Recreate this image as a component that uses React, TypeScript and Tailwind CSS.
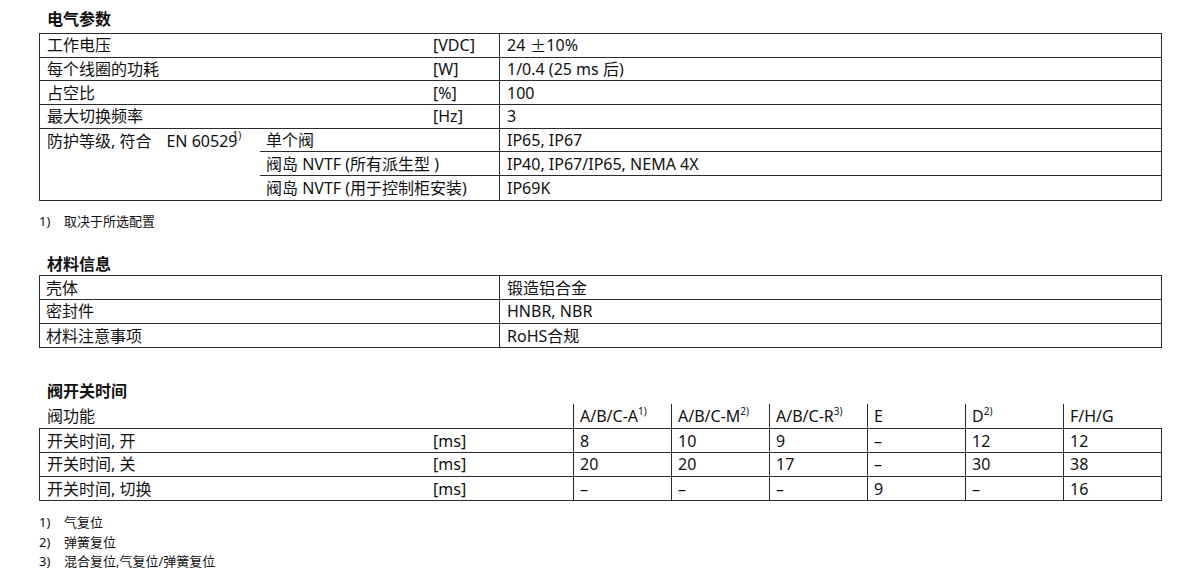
import React from "react";

const FONT = "font-['Noto_Sans','Noto_Sans_CJK_SC',sans-serif]";

const Sup: React.FC<{ children: React.ReactNode; className?: string }> = ({ children, className = "" }) => (
  <span className={`relative -top-[5px] text-[10px] ${className}`}>{children}</span>
);

const Title: React.FC<{ children: React.ReactNode; className?: string }> = ({ children, className = "" }) => (
  <div className={`h-[20px] pl-[8px] text-[16px] font-bold leading-[20px] ${className}`}>{children}</div>
);

const Note: React.FC<{ n: string; text: string }> = ({ n, text }) => (
  <div className="flex h-[19.5px] items-center text-[13px]">
    <span className="w-[25px]">{n}</span>
    <span>{text}</span>
  </div>
);

const electrical: { label: string; unit: string; value: React.ReactNode }[] = [
  {
    label: "工作电压",
    unit: "[VDC]",
    value: (
      <>
        24<span className="ml-[5px] font-['Noto_Sans_CJK_SC',sans-serif]">±</span>10%
      </>
    ),
  },
  { label: "每个线圈的功耗", unit: "[W]", value: "1/0.4 (25 ms 后)" },
  { label: "占空比", unit: "[%]", value: "100" },
  { label: "最大切换频率", unit: "[Hz]", value: "3" },
];

const protection = [
  { sub: "单个阀", value: "IP65, IP67" },
  { sub: "阀岛 NVTF (所有派生型 )", value: "IP40, IP67/IP65, NEMA 4X" },
  { sub: "阀岛 NVTF (用于控制柜安装)", value: "IP69K" },
];

const materials = [
  { label: "壳体", value: "锻造铝合金" },
  { label: "密封件", value: "HNBR, NBR" },
  { label: "材料注意事项", value: "RoHS合规" },
];

const timeHeaders: { name: string; note?: string }[] = [
  { name: "A/B/C-A", note: "1)" },
  { name: "A/B/C-M", note: "2)" },
  { name: "A/B/C-R", note: "3)" },
  { name: "E" },
  { name: "D", note: "2)" },
  { name: "F/H/G" },
];

const timeRows = [
  { label: "开关时间, 开", values: ["8", "10", "9", "–", "12", "12"] },
  { label: "开关时间, 关", values: ["20", "20", "17", "–", "30", "38"] },
  { label: "开关时间, 切换", values: ["–", "–", "–", "9", "–", "16"] },
];

const row = "flex h-[23.7px] items-center border-b border-[#2b2b2b] last:border-b-0";

export default function App() {
  return (
    <div className={`min-h-screen bg-white pt-[9px] pl-[39px] pr-[40px] text-[16px] text-[#111] ${FONT}`}>
      {/* Electrical */}
      <Title>电气参数</Title>
      <div className="mt-[4px] border border-[#2b2b2b]">
        {electrical.map((r) => (
          <div key={r.label} className={row}>
            <div className="w-[386px] pl-[7px]">{r.label}</div>
            <div className="w-[73px] pl-[7px]">{r.unit}</div>
            <div className="flex h-full flex-1 items-center border-l border-[#2b2b2b] pl-[7px]">{r.value}</div>
          </div>
        ))}
        <div className="flex">
          <div className="flex h-[23.7px] w-[220px] items-center whitespace-nowrap pl-[7px]">
            防护等级, 符合<span className="ml-[15px]">EN 60529</span>
            <Sup className="-ml-[5px]">1)</Sup>
          </div>
          <div className="flex-1">
            {protection.map((p) => (
              <div key={p.sub} className={row}>
                <div className="w-[239px] whitespace-nowrap pl-[6px]">{p.sub}</div>
                <div className="flex h-full flex-1 items-center border-l border-[#2b2b2b] pl-[7px]">{p.value}</div>
              </div>
            ))}
          </div>
        </div>
      </div>
      <div className="mt-[11px]">
        <Note n="1)" text="取决于所选配置" />
      </div>

      {/* Materials */}
      <Title className="mt-[23px]">材料信息</Title>
      <div className="mt-[1px] border border-[#2b2b2b]">
        {materials.map((m) => (
          <div key={m.label} className={row}>
            <div className="w-[459px] pl-[6px]">{m.label}</div>
            <div className="flex h-full flex-1 items-center border-l border-[#2b2b2b] pl-[7px]">{m.value}</div>
          </div>
        ))}
      </div>

      {/* Switching times */}
      <Title className="mt-[33px]">阀开关时间</Title>
      <div className="mt-[3px] flex h-[24px] items-center">
        <div className="w-[534px] pl-[8px]">阀功能</div>
        {timeHeaders.map((h) => (
          <div key={h.name} className="flex h-full w-[98px] items-center whitespace-nowrap border-l border-[#2b2b2b] pl-[6px]">
            {h.name}
            {h.note && <Sup>{h.note}</Sup>}
          </div>
        ))}
      </div>
      <div className="border border-[#2b2b2b]">
        {timeRows.map((r) => (
          <div key={r.label} className={row}>
            <div className="w-[386px] pl-[7px]">{r.label}</div>
            <div className="w-[147px] pl-[7px]">[ms]</div>
            {r.values.map((v, i) => (
              <div key={i} className="flex h-full w-[98px] items-center border-l border-[#2b2b2b] pl-[6px]">
                {v}
              </div>
            ))}
          </div>
        ))}
      </div>
      <div className="mt-[12px]">
        <Note n="1)" text="气复位" />
        <Note n="2)" text="弹簧复位" />
        <Note n="3)" text="混合复位,气复位/弹簧复位" />
      </div>
    </div>
  );
}
